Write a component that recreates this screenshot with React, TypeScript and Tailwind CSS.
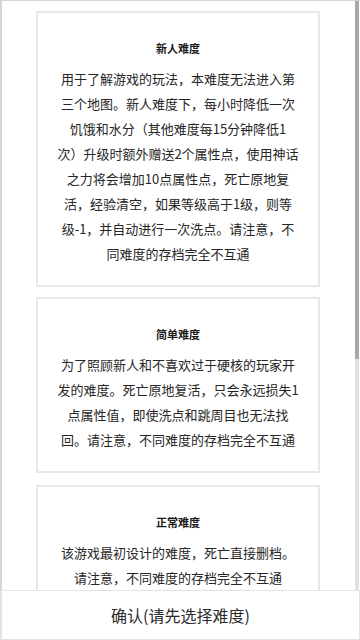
const cards = [
  {
    title: "新人难度",
    lines: [
      "用于了解游戏的玩法，本难度无法进入第",
      "三个地图。新人难度下，每小时降低一次",
      "饥饿和水分（其他难度每15分钟降低1",
      "次）升级时额外赠送2个属性点，使用神话",
      "之力将会增加10点属性点，死亡原地复",
      "活，经验清空，如果等级高于1级，则等",
      "级-1，并自动进行一次洗点。请注意，不",
      "同难度的存档完全不互通",
    ],
  },
  {
    title: "简单难度",
    lines: [
      "为了照顾新人和不喜欢过于硬核的玩家开",
      "发的难度。死亡原地复活，只会永远损失1",
      "点属性值，即使洗点和跳周目也无法找",
      "回。请注意，不同难度的存档完全不互通",
    ],
  },
  {
    title: "正常难度",
    lines: ["该游戏最初设计的难度，死亡直接删档。", "请注意，不同难度的存档完全不互通"],
  },
];

function DifficultyCard({ title, lines }: { title: string; lines: string[] }) {
  return (
    <div className="w-[284px] shrink-0 border-2 border-[#e8e8e8] bg-white pt-[27px] pb-[19px] flex flex-col items-center">
      <div className="text-[11px] leading-[16px] font-bold text-[#1a1a1a]">{title}</div>
      <div className="mt-[10px] flex flex-col items-center">
        {lines.map((line, i) => (
          <div key={i} className="text-[13px] leading-[25px] text-[#262626] whitespace-nowrap">
            {line}
          </div>
        ))}
      </div>
    </div>
  );
}

export default function App() {
  return (
    <div
      className="w-[360px] h-[640px] bg-white overflow-hidden flex flex-col"
      style={{ fontFamily: '"Noto Sans CJK SC", "Noto Sans", sans-serif' }}
    >
      {/* scroll area */}
      <div className="relative h-[590px] shrink-0 border-l-2 border-t border-[#d6d6d6] overflow-hidden">
        <div className="flex flex-col pl-[34px] pt-[10px]">
          <DifficultyCard {...cards[0]} />
          <div className="h-[10px] shrink-0" />
          <DifficultyCard {...cards[1]} />
          <div className="h-[12px] shrink-0" />
          <DifficultyCard {...cards[2]} />
        </div>
        {/* scrollbar */}
        <div className="absolute right-[1px] top-0 bottom-0 w-[4px] flex flex-col bg-[#e2e2e2]">
          <div className="h-[358px] bg-[#a8a8a8]" />
        </div>
      </div>

      {/* confirm bar */}
      <div className="h-[50px] shrink-0 border border-[#e2e2e2] border-l-2 flex items-center justify-center">
        <span className="text-[16px] text-[#2a2a2a]">确认(请先选择难度)</span>
      </div>
    </div>
  );
}
